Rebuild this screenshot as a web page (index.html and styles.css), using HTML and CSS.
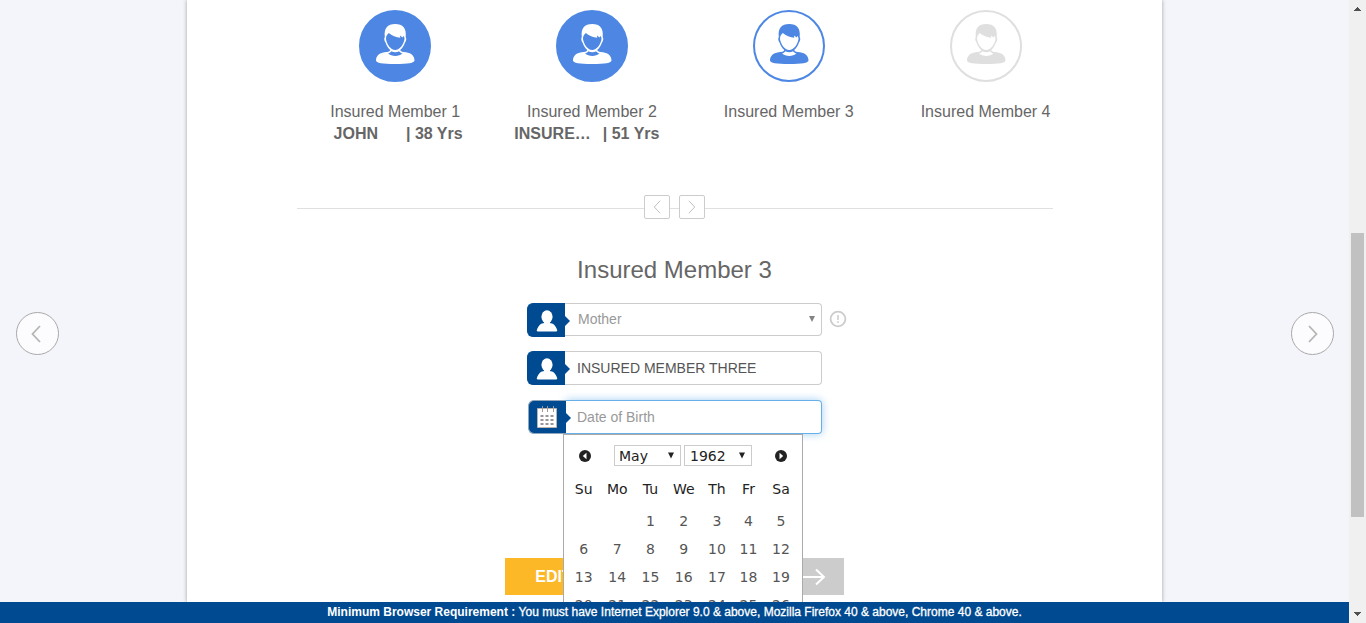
FILE: index.html
```html
<!DOCTYPE html>
<html lang="en">
<head>
<meta charset="utf-8">
<title>Insured Members</title>
<link rel="stylesheet" href="styles.css">
</head>
<body>
<svg class="defs" width="0" height="0">
  <symbol id="person" viewBox="0 0 40 42">
    <path fill="currentColor" fill-rule="evenodd" d="M9.800 14C8.800 5 12.500 1 20.200 1S31.600 5 30.700 14C31.800 15 31.200 18.500 30 19.500C28.800 23 27 25.500 25.200 27C25.500 28.800 28 29 31 29.200C36.500 30 39.500 33 39.500 37.500C39.500 40 33 41 20.200 41S1 40 1 37.500C1 33 4 30 9.500 29.200C12.500 29 15 28.800 15.300 27C13.500 25.500 11.700 23 10.500 19.500C9.300 18.500 8.800 15 9.800 14ZM13.800 10C12 11.500 11 13 11 16C11.800 21 15.500 27 20.200 27S28.800 21 29.500 16C29.500 14.500 29.200 13.700 28.500 13L27.700 14.500L25 12.500L25.300 14.700C21.500 14.300 16.500 12.700 13.800 10ZM16.400 28.200C15.800 29.300 14.500 30 13 30.500C16.500 33.800 24 33.800 27.500 30.500C26 30 24.700 29.300 24.100 28.200C22 29.500 18.500 29.500 16.400 28.200Z"/>
  </symbol>
  <symbol id="user" viewBox="0 0 22 22">
    <ellipse cx="11" cy="6.800" rx="5.600" ry="6.500" fill="#fff"/>
    <path fill="#fff" d="M5.800 13.500Q8 13.500 8.500 12H13.500Q14 13.500 16.200 13.500C18.500 14.500 20.500 17.500 21.300 20.500Q21.300 21.500 20 21.500H2Q.700 21.500 .700 20.500C1.500 17.500 3.500 14.500 5.800 13.500Z"/>
  </symbol>
  <symbol id="left" viewBox="0 0 10 18"><path d="M9 1L1.500 9L9 17" fill="none" stroke="currentColor"/></symbol>
  <symbol id="right" viewBox="0 0 10 18"><path d="M1 1L8.500 9L1 17" fill="none" stroke="currentColor"/></symbol>
</svg>

<div class="window">
  <main class="page">
    <button class="side prev"><svg><use href="#left"/></svg></button>
    <section class="panel">
      <div class="members">
        <div class="member">
          <span class="avatar filled"><svg><use href="#person"/></svg></span>
          <span class="title">Insured Member 1</span>
          <div class="detail"><span class="name">JOHN</span><span>| 38 Yrs</span></div>
        </div>
        <div class="member">
          <span class="avatar filled"><svg><use href="#person"/></svg></span>
          <span class="title">Insured Member 2</span>
          <div class="detail"><span class="name">INSURE…</span><span>| 51 Yrs</span></div>
        </div>
        <div class="member">
          <span class="avatar active"><svg><use href="#person"/></svg></span>
          <span class="title">Insured Member 3</span>
        </div>
        <div class="member">
          <span class="avatar"><svg><use href="#person"/></svg></span>
          <span class="title">Insured Member 4</span>
        </div>
      </div>

      <div class="divider">
        <i class="before"></i>
        <button><svg><use href="#left"/></svg></button>
        <i class="short"></i>
        <button><svg><use href="#right"/></svg></button>
        <i></i>
      </div>

      <h2>Insured Member 3</h2>

      <div class="form">
        <div class="field select">
          <span class="tag"><svg class="user"><use href="#user"/></svg></span>
          <span class="box">Mother<svg class="caret" viewBox="0 0 6 6"><path d="M0 0H6L3 6Z" fill="#848484"/></svg></span>
          <svg class="info" viewBox="0 0 18 18"><circle cx="9" cy="9" r="7.400" fill="none" stroke="#ccc" stroke-width="1.800"/><path d="M9 5V10M9 11.300V13" stroke="#ccc" stroke-width="1.500"/></svg>
        </div>
        <div class="field">
          <span class="tag"><svg class="user"><use href="#user"/></svg></span>
          <span class="box value">INSURED MEMBER THREE</span>
        </div>
        <div class="field focus">
          <span class="tag"><svg class="cal" viewBox="0 0 20 22"><path d="M.500 2.500H19.500V21.500H.500Z" fill="#fff" stroke="#bbb3b0"/><path d="M5.500 0V6M10.500 0V6M16.500 0V6" stroke="#a39b98"/><path d="M3.500 10H6.500M8.500 10H11.500M13.500 10H16.500M3.500 14H6.500M8.500 14H11.500M13.500 14H16.500M3.500 18H6.500M8.500 18H11.500M13.500 18H16.500" stroke="#99969b" stroke-width="2"/></svg></span>
          <span class="box">Date of Birth</span>

          <div class="datepicker">
            <div class="head">
              <svg class="nav" viewBox="0 0 12 12"><circle cx="6" cy="6" r="6" fill="#222"/><path d="M7.500 2.800V9.200L3.800 6Z" fill="#fff"/></svg>
              <span class="pick month">May<svg viewBox="0 0 6 6"><path d="M0 0H6L3 6Z" fill="#222"/></svg></span>
              <span class="pick year">1962<svg viewBox="0 0 6 6"><path d="M0 0H6L3 6Z" fill="#222"/></svg></span>
              <svg class="nav next-month" viewBox="0 0 12 12"><circle cx="6" cy="6" r="6" fill="#222"/><path d="M4.500 2.800V9.200L8.200 6Z" fill="#fff"/></svg>
            </div>
            <div class="grid week"><b>Su</b><b>Mo</b><b>Tu</b><b>We</b><b>Th</b><b>Fr</b><b>Sa</b></div>
            <div class="grid days">
              <span></span><span></span><span>1</span><span>2</span><span>3</span><span>4</span><span>5</span>
              <span>6</span><span>7</span><span>8</span><span>9</span><span>10</span><span>11</span><span>12</span>
              <span>13</span><span>14</span><span>15</span><span>16</span><span>17</span><span>18</span><span>19</span>
              <span>20</span><span>21</span><span>22</span><span>23</span><span>24</span><span>25</span><span>26</span>
            </div>
          </div>
        </div>
      </div>

      <div class="actions">
        <button class="edit">EDIT</button>
        <button class="go"><svg viewBox="0 0 24 18"><path d="M0 9H22M14 1.500L22 9L14 16.500" fill="none" stroke="#fff" stroke-width="2"/></svg></button>
      </div>
    </section>
    <button class="side next"><svg><use href="#right"/></svg></button>
  </main>
  <footer><b>Minimum Browser Requirement :</b>&nbsp;<span>You must have Internet Explorer 9.0 &amp; above, Mozilla Firefox 40 &amp; above, Chrome 40 &amp; above.</span></footer>
</div>

<div class="scrollbar">
  <svg viewBox="0 0 7 4" shape-rendering="crispEdges"><path d="M0 4L3.500 0L7 4Z" fill="#505050"/></svg>
  <div class="thumb"></div>
  <svg viewBox="0 0 7 4" shape-rendering="crispEdges"><path d="M0 0L3.500 4L7 0Z" fill="#505050"/></svg>
</div>
</body>
</html>
```
FILE: styles.css
```css
* { box-sizing: border-box; }
body {
  margin: 0;
  display: flex;
  height: 623px;
  overflow: hidden;
  background: #f4f5fa;
  color: #666;
  font: 16px/22px "Liberation Sans", Arial, sans-serif;
}
button { padding: 0; font: inherit; }
svg { display: block; }
.defs { position: absolute; }

.window { width: 1349px; display: flex; flex-direction: column; }
.page { height: 602px; overflow: hidden; display: flex; justify-content: space-between; align-items: flex-start; padding: 0 15px 0 16px; }

.side {
  width: 43px; height: 43px; margin-top: 312px;
  display: flex; align-items: center; justify-content: center;
  border: 1px solid #a9a9a9; border-radius: 50%;
  background: #fcfcfe; color: #b5b5b5;
}
.side svg { width: 10px; height: 18px; stroke-width: 1.8; }
.side.prev svg { margin-right: 3px; }
.side.next svg { margin-left: 1px; }

.panel {
  width: 975px; height: 602px; margin-right: 1px;
  background: #fff;
  box-shadow: 0 0 4px rgba(0, 0, 0, .35);
}

.members { display: grid; grid-template-columns: repeat(4, 196.8px); padding: 10px 0 0 109.800px; height: 195px; }
.member { display: flex; flex-direction: column; align-items: center; }
.avatar {
  width: 72px; height: 72px; margin-bottom: 19px;
  display: flex; justify-content: center;
  border: 2px solid #dfdfdf; border-radius: 50%; color: #dfdfdf;
}
.avatar svg { width: 40px; height: 42px; margin-top: 11px; }
.avatar.filled { background: #4d87e3; border-color: #4d87e3; color: #fff; }
.avatar.active { border-color: #4d87e3; color: #4d87e3; }
.detail { display: flex; align-self: stretch; margin-left: 19px; font-weight: bold; white-space: nowrap; }
.name { width: 80px; margin-right: 10.200px; text-align: center; }

.divider { display: flex; align-items: center; width: 756px; height: 24px; margin: 0 0 0 110px; }
.divider i { flex: 1; height: 1px; margin-top: 2px; background: #e0e0e0; }
.divider .before { flex: none; width: 347px; }
.divider .short { flex: none; width: 9px; }
.divider button {
  width: 26px; height: 24px;
  display: flex; align-items: center; justify-content: center;
  border: 1px solid #ccc; border-radius: 2px; background: #fff; color: #bbb;
}
.divider svg { width: 8px; height: 14px; stroke-width: 1.2; }

h2 { margin: 35px 0 0; font: 24px/32px "Liberation Sans", Arial, sans-serif; text-align: center; }

.form { width: 320px; margin: 17px 0 0 340px; font-size: 14px; }
.field { position: relative; display: flex; align-items: flex-start; height: 34px; margin-bottom: 14px; }
.tag {
  position: relative; width: 38px; height: 34px; flex: none;
  display: flex; justify-content: center; align-items: center;
  background: #004a91; border: 1px solid #004a91; border-right: 0;
  border-radius: 6px 0 0 6px;
}
.tag::after {
  content: ""; position: absolute; left: 100%; top: 12px; z-index: 1;
  border: 5px solid transparent; border-left-color: #004a91; border-right: 0;
}
.user { width: 22px; height: 22px; margin-top: 1px; }
.cal { width: 20px; height: 22px; margin-right: 1px; }
.box {
  width: 257px; height: 34px; padding: 0 6px 0 12px;
  display: flex; align-items: center; justify-content: space-between;
  border: 1px solid #ccc; border-left: 0; border-radius: 0 4px 4px 0;
  color: #999;
}
.select .box { height: 33px; padding-left: 13px; padding-bottom: 1px; }
.value { color: #555; }
.caret { width: 6px; height: 6px; margin-bottom: 1px; }
.info { width: 18px; height: 18px; margin: 6.500px 0 0 7.500px; }
.focus { margin-top: 15px; }
.focus .tag { width: 38px; margin-left: 1px; border-color: #8fa6bd; z-index: 1; }
.focus .box { width: 256px; padding-left: 11px; border: 1px solid #66afe9; border-left: 0; box-shadow: 0 0 8px rgba(102, 175, 233, .6); }

.datepicker {
  position: absolute; left: 36px; top: 34px; z-index: 3;
  width: 240px; height: 230px; padding: 10px 3px 0;
  border: 1px solid #aaa; background: #fff; color: #222;
  font: 14px/22px "DejaVu Sans", Verdana, sans-serif;
}
.head { display: flex; align-items: center; height: 22px; padding-left: 12px; }
.nav { width: 12px; height: 12px; }
.nav.next-month { margin-left: 23px; }
.pick { display: flex; align-items: center; justify-content: space-between; height: 21px; margin-bottom: 1px; padding: 0 6px 0 4px; border: 1px solid #ccc; }
.pick svg { width: 6px; height: 7px; margin-bottom: 1px; }
.month { width: 67px; margin: 0 3px 1px 23px; }
.year { width: 68px; padding-left: 5px; }
.grid { display: grid; grid-template-columns: 33.500px 33.500px 33px 33.500px 33px 30px 35px; text-align: center; }
.grid b { font-weight: normal; }
.week { margin-top: 11px; }
.days { margin-top: 7px; grid-auto-rows: 28px; line-height: 28px; color: #555; }

.actions { display: flex; width: 339px; height: 37px; margin: 124px 0 0 318px; }
.actions button { border: 0; }
.edit { width: 97px; background: #fdb827; color: #fff; font-weight: bold; }
.go { flex: 1; display: flex; align-items: center; justify-content: flex-end; padding-right: 18px; background: #ccc; }
.go svg { width: 24px; height: 18px; }

footer { height: 21px; background: #004a91; color: #fff; font-size: 12px; line-height: 20px; text-align: center; white-space: nowrap; }
footer span { -webkit-text-stroke: .3px #fff; }

.scrollbar { width: 17px; display: flex; flex-direction: column; align-items: center; justify-content: space-between; padding: 7px 0; background: #f0f0f0; }
.scrollbar svg { width: 7px; height: 4px; }
.thumb { width: 13px; height: 284px; margin-top: 127px; background: #c1c1c1; }
```
